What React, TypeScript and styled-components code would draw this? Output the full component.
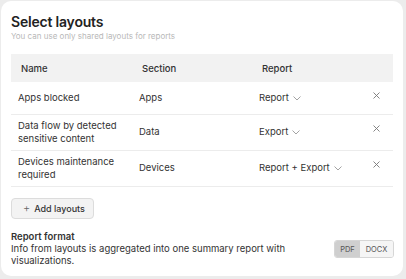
import React from "react";
import styled, { createGlobalStyle } from "styled-components";

const Global = createGlobalStyle`
  html, body { margin: 0; padding: 0; background: #ececec; }
  body { font-family: Inter, "Noto Sans", sans-serif; color: #2b2b2b; }
  * { box-sizing: border-box; }
`;

const Card = styled.div`
  margin: 1px;
  width: 402px;
  height: 275px;
  background: #fff;
  border-radius: 10px;
  padding: 12px 10px 0 10px;
  display: flex;
  flex-direction: column;
`;

const Title = styled.h1`
  margin: 0;
  font-size: 14px;
  letter-spacing: -0.2px;
  font-weight: 600;
  line-height: 17px;
  color: #222;
`;

const Subtitle = styled.div`
  margin-top: 1px;
  font-size: 8px;
  color: #b8b8b8;
  line-height: 11px;
`;

const Table = styled.div`
  margin-top: 12px;
  display: flex;
  flex-direction: column;
`;

const columns = "121px 120px 1fr 20px";

const HeaderRow = styled.div`
  display: grid;
  grid-template-columns: ${columns};
  height: 28px;
  align-items: center;
  background: #f2f2f2;
  padding-left: 10px;
  font-size: 9.5px;
  font-weight: 500;
  color: #333;
`;

const Row = styled.div<{ $h: number }>`
  display: grid;
  grid-template-columns: ${columns};
  height: ${(p) => p.$h}px;
  align-items: center;
  padding-left: 7px;
  border-bottom: 1px solid #ececec;
  font-size: 9.5px;
  color: #333;
  line-height: 12.5px;
`;

const NameCell = styled.span`
  max-width: 112px;
`;

const Select = styled.span`
  display: inline-flex;
  align-items: center;
  gap: 4px;
`;

const Close = styled.button`
  align-self: start;
  margin-top: 10px;
  justify-self: start;
  border: none;
  background: none;
  padding: 0;
  color: #777;
  display: flex;
`;

const Footer = styled.div`
  margin-top: 11px;
  display: flex;
  flex-direction: column;
`;

const AddButton = styled.button`
  align-self: flex-start;
  height: 21px;
  padding: 0 8px 0 11px;
  border: 1px solid #dcdcdc;
  background: #f3f3f3;
  border-radius: 4px;
  display: inline-flex;
  align-items: center;
  gap: 4px;
  font-family: inherit;
  font-size: 9px;
  font-weight: 500;
  color: #333;
`;

const Plus = styled.span`
  font-size: 11px;
  font-weight: 300;
  color: #666;
  line-height: 1;
`;

const FormatRow = styled.div`
  margin-top: 12px;
  display: flex;
  align-items: center;
  justify-content: space-between;
`;

const FormatText = styled.div`
  font-size: 9.5px;
  line-height: 12px;
  color: #333;
  width: 300px;
`;

const FormatTitle = styled.div`
  font-weight: 600;
`;

const Segmented = styled.div`
  display: flex;
  border: 1px solid #d6d6d6;
  border-radius: 3px;
  overflow: hidden;
  margin-right: -1px;
`;

const Seg = styled.div<{ $active?: boolean }>`
  height: 16px;
  width: ${(p) => (p.$active ? 25 : 33)}px;
  display: flex;
  align-items: center;
  justify-content: center;
  font-size: 7.5px;
  color: #555;
  background: ${(p) => (p.$active ? "#cfcfcf" : "#f5f5f5")};
`;

const Chevron = () => (
  <svg width="8" height="5" viewBox="0 0 8 5" fill="none">
    <path d="M0.5 0.5L4 4L7.5 0.5" stroke="#999" strokeWidth="0.9" />
  </svg>
);

const X = () => (
  <svg width="7" height="7" viewBox="0 0 7 7" fill="none">
    <path d="M0.5 0.5L6.5 6.5M6.5 0.5L0.5 6.5" stroke="#777" strokeWidth="0.9" />
  </svg>
);

const rows = [
  { name: "Apps blocked", section: "Apps", report: "Report", h: 33 },
  { name: "Data flow by detected sensitive content", section: "Data", report: "Export", h: 36 },
  { name: "Devices maintenance required", section: "Devices", report: "Report + Export", h: 36 },
];

export default function App() {
  return (
    <>
      <Global />
      <Card>
        <Title>Select layouts</Title>
        <Subtitle>You can use only shared layouts for reports</Subtitle>
        <Table>
          <HeaderRow>
            <span>Name</span>
            <span>Section</span>
            <span>Report</span>
            <span />
          </HeaderRow>
          {rows.map((r) => (
            <Row key={r.name} $h={r.h}>
              <NameCell>{r.name}</NameCell>
              <span>{r.section}</span>
              <Select>
                {r.report}
                <Chevron />
              </Select>
              <Close aria-label="remove">
                <X />
              </Close>
            </Row>
          ))}
        </Table>
        <Footer>
          <AddButton>
            <Plus>+</Plus>
            Add layouts
          </AddButton>
          <FormatRow>
            <FormatText>
              <FormatTitle>Report format</FormatTitle>
              Info from layouts is aggregated into one summary report with visualizations.
            </FormatText>
            <Segmented>
              <Seg $active>PDF</Seg>
              <Seg>DOCX</Seg>
            </Segmented>
          </FormatRow>
        </Footer>
      </Card>
    </>
  );
}
